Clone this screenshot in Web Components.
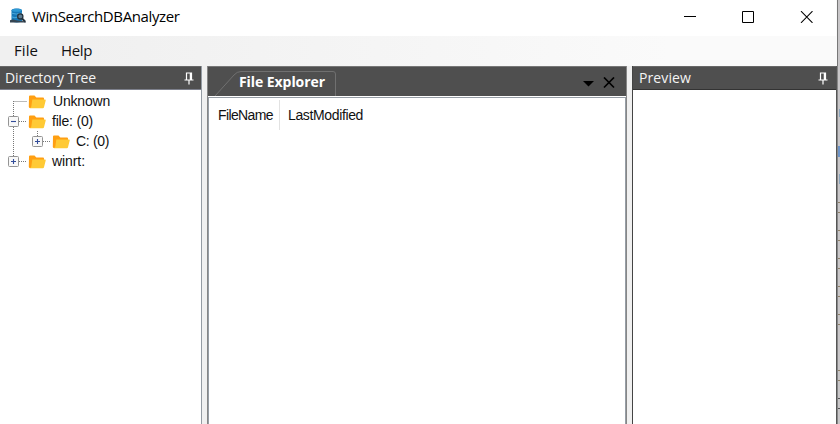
<!DOCTYPE html>
<html lang="en"><head><meta charset="utf-8"><title>WinSearchDBAnalyzer</title>
<style>html,body{margin:0;height:100%;overflow:hidden;background:#ccc}</style></head><body>
<app-window></app-window>
<script>
const define=(name,html,setup)=>customElements.define(name,class extends HTMLElement{
  connectedCallback(){
    if(this.shadowRoot)return;
    const t=document.createElement('template');t.innerHTML=html;
    this.attachShadow({mode:'open'}).append(t.content.cloneNode(true));
    if(setup)setup(this,this.shadowRoot);
  }
});
// Text label whose tracking adapts to its "w" width.
define('ui-label',`<style>:host{display:inline-block;white-space:nowrap;flex:none}span{display:inline-block;white-space:nowrap}</style><span></span>`,(el,r)=>{
  const s=r.querySelector('span');s.textContent=el.getAttribute('text');
  const w=+el.getAttribute('w');
  s.style.letterSpacing=((w-s.getBoundingClientRect().width)/s.textContent.length)+'px';
});
define('db-icon',`<style>:host{display:block;width:18px;height:16px}svg{display:block}</style>
<svg width="18" height="16" viewBox="0 0 18 16"><path d="M2.5 2.2C2.500 -.2 13 -.2 13 2.2V12.8C13 15 2.5 15 2.5 12.8Z" fill="#1678b8"/><ellipse cx="7.700" cy="2.2" rx="4.8" ry="1.5" fill="#2e9ad6"/><path d="M2.5 5.2Q7 7 13 5M2.5 8.8Q6 10.6 9 9" fill="none" stroke="#5ab5e2" stroke-width=".8"/><path d="M1 12.2Q4 10.8 7 12.2L17 13.500V14.5H1Z" fill="#354552"/><circle cx="11.3" cy="8.4" r="2.6" fill="#607f94" stroke="#26333e" stroke-width="1.3"/><path d="M13 10.500L16.200 13.800" stroke="#26333e" stroke-width="2"/></svg>`);
define('title-bar',`<style>:host{display:flex;height:36px;background:#fff;padding-left:9px;box-sizing:border-box;font:15px/32px "Open Sans","Noto Sans",sans-serif;color:#000}db-icon{margin:8px 5px 0 0}.c{margin-left:auto;padding:11px 23px 0 0;display:flex;gap:46px}svg{display:block}</style>
<db-icon></db-icon><ui-label text="WinSearchDBAnalyzer" w="147.500"></ui-label>
<div class="c"><svg width="12" height="12"><path d="M0 5.5H12" stroke="#000"/></svg><svg width="12" height="12"><path d="M.5 .5H11.5V11.5H.5Z" fill="none" stroke="#000"/></svg><svg width="13" height="12"><path d="M1 .2L12.500 11.8M12.500 .2L1 11.8" stroke="#000" stroke-width="1.1"/></svg></div>`);
define('menu-bar',`<style>:host{display:flex;height:30px;box-sizing:border-box;padding-left:14px;gap:23px;background:linear-gradient(90deg,#f0f0f0 10%,#fafafa 80%);font:15px/28px "Open Sans","Noto Sans",sans-serif;color:#111}</style><ui-label text="File" w="24"></ui-label><ui-label text="Help" w="31"></ui-label>`);
define('pin-icon',`<style>:host{display:block}svg{display:block}</style><svg width="10" height="13"><path d="M2.5 8V1H7.5V8M.500 8H9.500M5 8.5V12.500" fill="none" stroke="#fff" stroke-width="1.2"/><path d="M6.5 1V8" stroke="#fff" stroke-width="1.5"/></svg>`);
define('panel-header',`<style>:host{display:flex;justify-content:space-between;height:24px;box-sizing:border-box;background:#4f4f4f;border-top:1px solid #686868;border-bottom:1px solid var(--edge,#7d808c);color:#f4f4f4;font:14px/22px "Open Sans","Noto Sans",sans-serif;padding:0 var(--right,7px) 0 var(--pad,5px)}pin-icon{margin-top:5px}</style><slot></slot><pin-icon></pin-icon>`);
define('folder-icon',`<style>:host{display:block;margin-right:6px}svg{display:block}</style><svg width="18" height="14"><path d="M1 1.5Q1 .5 2 .5H6.5L8.3 2.5H15Q16 2.5 16 3.5V11L14.5 13H2Q.8 13 .8 11.8Z" fill="#ff9f12"/><path d="M4.3 4.5H17Q18 4.5 17.7 5.5L16 12.2Q15.8 13.2 14.8 13.2H1.8Q3 12.8 3.3 11.5Z" fill="#ffca35"/></svg>`);
define('tree-toggle',`<style>:host{display:block}svg{display:block}</style><svg width="18" height="20" overflow="visible"></svg>`,(el,r)=>{
  const k=el.getAttribute('kind'),dot='stroke="#777" stroke-dasharray="1 1" fill="none"';
  r.querySelector('svg').innerHTML={
   leaf:`<path d="M5.5 10.5H19M5.5 10V20" ${dot}/>`,
   minus:`<path d="M5.5 0V6M5.5 16V40M11 10.5H19" ${dot}/>`,
   plus:`<path d="M5.5 0V6M11 10.5H19" ${dot}/>`}[k]+(k==='leaf'?'':`<rect x=".5" y="5.5" width="10" height="10" rx="1" fill="#f8f8f8" stroke="#949494"/><path d="M3 10.5H8${k==='plus'?'M5.5 8V13':''}" stroke="#334d99" stroke-width="1.1"/>`);
});
define('tree-row',`<style>:host{display:flex;height:20px;align-items:center;color:#111;font:14px/20px "Liberation Sans",Arial,sans-serif;padding-left:8px}:host([nested]){padding-left:32px}folder-icon{margin-left:2px;margin-top:1px}</style><slot name="toggle"></slot><folder-icon></folder-icon><slot></slot>`);
define('directory-panel',`<style>:host{display:flex;flex-direction:column;width:202px;box-sizing:border-box;background:#fff;border-right:1px solid #949ba3}.tree{padding-top:1px}.first{margin-left:1px}</style>
<panel-header><ui-label text="Directory Tree" w="91"></ui-label></panel-header><div class="tree">
<tree-row><tree-toggle slot="toggle" kind="leaf"></tree-toggle><ui-label class="first" text="Unknown" w="57"></ui-label></tree-row>
<tree-row><tree-toggle slot="toggle" kind="minus"></tree-toggle><ui-label text="file: (0)" w="41"></ui-label></tree-row>
<tree-row nested><tree-toggle slot="toggle" kind="plus"></tree-toggle><ui-label text="C: (0)" w="33"></ui-label></tree-row>
<tree-row><tree-toggle slot="toggle" kind="plus"></tree-toggle><ui-label text="winrt:" w="33"></ui-label></tree-row></div>`);
define('explorer-tabs',`<style>:host{display:grid;height:30px;background:#4f4f4f;border-top:1px solid #777;box-sizing:border-box;color:#fff;font:bold 14px/30px "Open Sans","Noto Sans",sans-serif}svg,.r{grid-area:1/1}.r{display:flex;padding-left:31px}.r svg{margin:10px 10px 0 auto}</style><svg width="418" height="29"><path d="M7 29L26 8Q29 4.5 33 4.5H125Q127.500 4.500 127.500 7V29" fill="none" stroke="#707070"/></svg><div class="r"><ui-label text="File Explorer" w="86"></ui-label><svg width="34" height="12"><path d="M1 4H12L6.500 9.500Z" fill="#000"/><path d="M22 .500L32 10.500M32 .500L22 10.500" stroke="#000" stroke-width="1.7"/></svg></div>`);
define('explorer-panel',`<style>:host{display:flex;flex-direction:column;width:420px;box-sizing:border-box;border:solid #868686;border-width:0 1px;background:#fff}.body{flex:1;margin-top:1px;border:1px solid #969da5;border-bottom:0;background:#fff}.cols{display:flex;margin:2px 0 0 9px;font:14px/30px "Liberation Sans",Arial,sans-serif;color:#111;height:30px}.n{width:61px;border-right:1px solid #e2e2e2;margin-right:8px}</style><explorer-tabs></explorer-tabs><div class="body"><div class="cols"><div class="n"><ui-label text="FileName" w="55"></ui-label></div><ui-label text="LastModified" w="75"></ui-label></div></div>`);
define('preview-panel',`<style>:host{display:flex;flex-direction:column;width:205px;box-sizing:border-box;border-left:1px solid #444;background:#fff;--edge:#333;--pad:6px;--right:8px}</style><panel-header><ui-label text="Preview" w="52"></ui-label></panel-header>`);
define('window-edge',`<style>:host{display:block;width:4px}svg{display:block}</style><svg width="4" height="424"><path d="M0 0H4V424H0Z" fill="#c8c6c8"/><path d="M0 0H1V66H0Z" fill="#fafafa"/><path d="M1.5 0V68" stroke="#777"/><path d="M.5 66V424" stroke="#555"/><path d="M1.500 66V424" stroke="#888"/><path d="M3.500 109V117M3.500 174V184" stroke="#8aa5bd"/><path d="M2 146H4V157H2Z" fill="#6d94c8"/><path d="M2 202.500H4M2 212.500H4M2 230.500H4M2 240.500H4M2 258.500H4M2 268.500H4M2 286.500H4M2 296.500H4M2 314.500H4M2 324.500H4M2 370.500H4M2 380.500H4" stroke="#8f8068"/><path d="M2 398.500H4M2 408.500H4" stroke="#555"/></svg>`);
define('app-window',`<style>:host{display:flex;width:840px;height:424px;overflow:hidden}.main{width:836px;display:flex;flex-direction:column;background:#f0f0f0}.work{flex:1;display:flex}.work>*{flex:none}explorer-panel{margin:0 5px}preview-panel{width:204px}</style><div class="main"><title-bar></title-bar><menu-bar></menu-bar><div class="work"><directory-panel></directory-panel><explorer-panel></explorer-panel><preview-panel></preview-panel></div></div><window-edge></window-edge>`);
</script></body></html>
